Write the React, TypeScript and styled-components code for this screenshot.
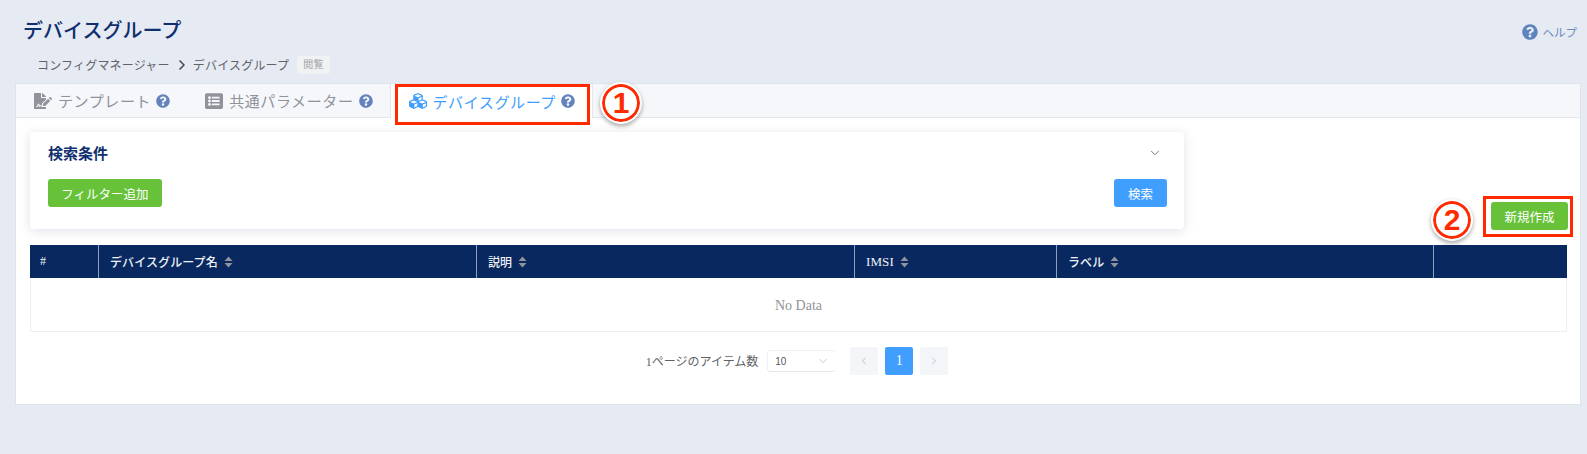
import React from 'react';
import styled, { createGlobalStyle } from 'styled-components';
import { FaCubes, FaFileSignature, FaListAlt, FaQuestionCircle } from 'react-icons/fa';
import { ChevronDown, ChevronLeft, ChevronRight } from 'lucide-react';

const GlobalStyle = createGlobalStyle`
  html, body {
    margin: 0;
    padding: 0;
    height: 454px;
    overflow: hidden;
    background: #e6eaf3;
    font-family: "Liberation Serif", "Noto Sans CJK JP", serif;
  }
`;

const Page = styled.div`
  position: relative;
  width: 1587px;
  height: 454px;
  padding: 0 6px 0 15px;
  box-sizing: border-box;
`;

const Header = styled.header`
  height: 83px;
  display: flex;
  justify-content: space-between;
  align-items: flex-start;
`;

const Title = styled.h1`
  margin: 17px 0 0 8px;
  font-size: 20px;
  line-height: 28px;
  font-weight: 500;
  color: #0f2f6e;
`;

const Breadcrumb = styled.div`
  margin: 10px 0 0 22px;
  height: 20px;
  display: flex;
  align-items: center;
  font-size: 12px;
  color: #606266;
  letter-spacing: 0.2px;
`;

const CrumbArrow = styled(ChevronRight)`
  width: 16px;
  height: 16px;
  margin: 0 3px 0 4px;
  color: #4a4d55;
`;

const ReadOnly = styled.span`
  margin-left: 8px;
  padding: 0 6px;
  height: 18px;
  line-height: 18px;
  font-size: 10px;
  color: #a0a3a9;
  background: #f1f2f4;
  border-radius: 3px;
`;

const Help = styled.div`
  margin: 24px 4px 0 0;
  display: flex;
  align-items: center;
  gap: 5px;
  font-size: 11.5px;
  color: #6a89bf;
  svg {
    width: 16px;
    height: 16px;
    color: #5f83bd;
  }
`;

const Panel = styled.section`
  height: 322px;
  background: #fff;
  border: 1px solid #dfe3ea;
  box-sizing: border-box;
`;

const TabBar = styled.nav`
  height: 34px;
  box-sizing: border-box;
  display: flex;
  background: #f5f7fb;
  border-bottom: 1px solid #e4e7ed;
`;

const Tab = styled.div<{ $active?: boolean }>`
  padding: 0 17px 0 18px;
  height: ${p => (p.$active ? '34px' : '33px')};
  display: flex;
  align-items: center;
  font-size: 15px;
  letter-spacing: 0.6px;
  color: ${p => (p.$active ? '#409eff' : '#909399')};
  background: ${p => (p.$active ? '#fff' : 'transparent')};
  border-left: ${p => (p.$active ? '1px solid #e4e7ed' : '0')};
  border-right: ${p => (p.$active ? '1px solid #e4e7ed' : '0')};
  box-sizing: border-box;
  > svg:first-child {
    width: 18px;
    height: 18px;
    margin-right: 6px;
  }
`;

const Hint = styled(FaQuestionCircle)`
  width: 14px;
  height: 14px;
  margin-left: 5px;
  color: #6483bd;
`;

const Body = styled.div`
  padding: 14px 13px 0 14px;
`;

const Toolbar = styled.div`
  display: flex;
  justify-content: space-between;
  align-items: flex-end;
`;

const SearchCard = styled.div`
  width: 1154px;
  height: 97px;
  padding: 0 17px 0 18px;
  box-sizing: border-box;
  background: #fff;
  border-radius: 4px;
  box-shadow: 0 2px 12px rgba(60, 70, 110, 0.16);
`;

const CardHead = styled.div`
  height: 47px;
  padding-bottom: 6px;
  box-sizing: border-box;
  display: flex;
  justify-content: space-between;
  align-items: center;
  color: #0f2f6e;
  font-size: 15px;
  font-weight: 700;
  svg {
    width: 14px;
    height: 14px;
    margin-right: 5px;
    color: #606266;
  }
`;

const CardActions = styled.div`
  display: flex;
  justify-content: space-between;
`;

const Button = styled.button<{ $color: string; $width: number }>`
  width: ${p => p.$width}px;
  height: 28px;
  padding: 0;
  border: 0;
  border-radius: 3px;
  color: #fff;
  background: ${p => p.$color};
  font-family: "Liberation Sans", "Noto Sans CJK JP", sans-serif;
  font-size: 12.5px;
`;

const NewButton = styled(Button)`
  margin-right: -1px;
  margin-bottom: -1px;
`;

const Table = styled.div`
  margin-top: 16px;
  width: 1537px;
  border: 1px solid #ebeef5;
  border-top: 0;
  box-sizing: border-box;
`;

const HeadRow = styled.div`
  height: 33px;
  margin: 0 -1px;
  display: grid;
  grid-template-columns: 69px 378px 378px 202px 377px 1fr;
  background: #08285f;
`;

const HeadCell = styled.div`
  display: flex;
  align-items: center;
  gap: 6px;
  padding-left: 11px;
  font-size: 12px;
  font-weight: 500;
  letter-spacing: 0.1px;
  color: #eef1f6;
  border-right: 1px solid #8f9fbd;
  &:first-child {
    padding-left: 10px;
  }
  &:last-child {
    border-right: 0;
  }
`;

const LatinLabel = styled.span`
  font-size: 13px;
`;

const Empty = styled.div`
  height: 53px;
  padding-top: 2px;
  box-sizing: border-box;
  display: flex;
  align-items: center;
  justify-content: center;
  font-size: 14px;
  color: #909399;
`;

const Pagination = styled.div`
  margin-top: 15px;
  display: flex;
  align-items: center;
  justify-content: center;
  padding-right: 3px;
  font-size: 12px;
  color: #606266;
`;

const Select = styled.div`
  margin: 0 14px 0 9px;
  width: 69px;
  height: 22px;
  padding: 0 6px 0 7px;
  box-sizing: border-box;
  display: flex;
  align-items: center;
  justify-content: space-between;
  border-bottom: 1px solid #e4e7ed;
  border-left: 1px solid #eef0f4;
  border-top: 1px solid #eef0f4;
  border-radius: 4px;
  font-family: "Liberation Sans", sans-serif;
  font-size: 10px;
  color: #55585e;
  svg {
    width: 14px;
    height: 14px;
    color: #b4b7bd;
  }
`;

const PageButton = styled.div<{ $current?: boolean }>`
  width: 28px;
  height: 28px;
  margin-right: 7px;
  display: flex;
  align-items: center;
  justify-content: center;
  border-radius: 2px;
  font-size: 14px;
  color: ${p => (p.$current ? '#fff' : '#c0c4cc')};
  background: ${p => (p.$current ? '#409eff' : '#f4f5f9')};
  svg {
    width: 12px;
    height: 12px;
  }
  &:last-child {
    margin-right: 0;
  }
`;

const RedFrame = styled.div<{ $left: number; $top: number; $width: number; $height: number }>`
  position: absolute;
  left: ${p => p.$left}px;
  top: ${p => p.$top}px;
  width: ${p => p.$width}px;
  height: ${p => p.$height}px;
  box-sizing: border-box;
  border: 3px solid #ff2a00;
`;

const Marker = styled.div<{ $left: number; $top: number }>`
  position: absolute;
  left: ${p => p.$left}px;
  top: ${p => p.$top}px;
  width: 42px;
  height: 42px;
  box-sizing: border-box;
  display: flex;
  align-items: center;
  justify-content: center;
  background: #fff;
  border-radius: 50%;
  border: 2px solid #fff;
  box-shadow: inset 0 0 0 3px #ff2a00, 0 2px 4px rgba(0, 0, 0, 0.35);
  font-family: "Liberation Sans", sans-serif;
  font-size: 30px;
  font-weight: 700;
  color: #ff2a00;
`;

const SortIcon = () => (
  <svg width="9" height="12" viewBox="0 0 9 12">
    <path d="M4.5 0.5 8.5 5H0.5Z" fill="#8f939b" />
    <path d="M4.5 11.5 0.5 7H8.5Z" fill="#8f939b" />
  </svg>
);

const App = () => (
  <Page>
    <GlobalStyle />
    <Header>
      <div>
        <Title>デバイスグループ</Title>
        <Breadcrumb>
          コンフィグマネージャー
          <CrumbArrow strokeWidth={2.5} />
          デバイスグループ
          <ReadOnly>閲覧</ReadOnly>
        </Breadcrumb>
      </div>
      <Help>
        <FaQuestionCircle />
        ヘルプ
      </Help>
    </Header>
    <Panel>
      <TabBar>
        <Tab>
          <FaFileSignature />
          テンプレート
          <Hint />
        </Tab>
        <Tab>
          <FaListAlt />
          共通パラメーター
          <Hint />
        </Tab>
        <Tab $active>
          <FaCubes />
          デバイスグループ
          <Hint />
        </Tab>
      </TabBar>
      <Body>
        <Toolbar>
          <SearchCard>
            <CardHead>
              検索条件
              <ChevronDown strokeWidth={1.5} />
            </CardHead>
            <CardActions>
              <Button $color="#67c23a" $width={114}>フィルター追加</Button>
              <Button $color="#409eff" $width={53}>検索</Button>
            </CardActions>
          </SearchCard>
          <NewButton $color="#67c23a" $width={77}>新規作成</NewButton>
        </Toolbar>
        <Table>
          <HeadRow>
            <HeadCell>#</HeadCell>
            <HeadCell>デバイスグループ名<SortIcon /></HeadCell>
            <HeadCell>説明<SortIcon /></HeadCell>
            <HeadCell><LatinLabel>IMSI</LatinLabel><SortIcon /></HeadCell>
            <HeadCell>ラベル<SortIcon /></HeadCell>
            <HeadCell />
          </HeadRow>
          <Empty>No Data</Empty>
        </Table>
        <Pagination>
          1ページのアイテム数
          <Select>
            10
            <ChevronDown strokeWidth={1.2} />
          </Select>
          <PageButton><ChevronLeft /></PageButton>
          <PageButton $current>1</PageButton>
          <PageButton><ChevronRight /></PageButton>
        </Pagination>
      </Body>
    </Panel>
    <RedFrame $left={395} $top={84} $width={195} $height={41} />
    <Marker $left={600} $top={82}>1</Marker>
    <RedFrame $left={1483} $top={196} $width={90} $height={41} />
    <Marker $left={1431} $top={199}>2</Marker>
  </Page>
);

export default App;
